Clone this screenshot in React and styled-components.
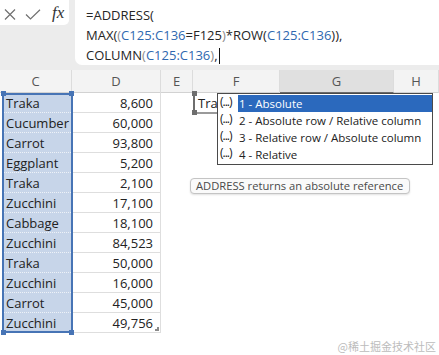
import React from "react";
import styled, { createGlobalStyle } from "styled-components";

const GlobalStyle = createGlobalStyle`
  html, body {
    margin: 0;
    padding: 0;
    background: #fff;
  }
  * {
    box-sizing: border-box;
  }
`;

const FONT = `"Open Sans", "Noto Sans", sans-serif`;

const rows = [
  ["Traka", "8,600"],
  ["Cucumber", "60,000"],
  ["Carrot", "93,800"],
  ["Eggplant", "5,200"],
  ["Traka", "2,100"],
  ["Zucchini", "17,100"],
  ["Cabbage", "18,100"],
  ["Zucchini", "84,523"],
  ["Traka", "50,000"],
  ["Zucchini", "16,000"],
  ["Carrot", "45,000"],
  ["Zucchini", "49,756"],
];

const headers = ["C", "D", "E", "F", "G", "H"];

const options = [
  "1 - Absolute",
  "2 - Absolute row / Relative column",
  "3 - Relative row / Absolute column",
  "4 - Relative",
];

function App() {
  return (
    <>
      <GlobalStyle />
      <Sheet>
        <TopBar>
          <IconBox>
            <svg width="12" height="11" viewBox="0 0 12 11">
              <path d="M1 0.5 L11 10.5 M11 0.5 L1 10.5" stroke="#707070" strokeWidth="1.2" fill="none" />
            </svg>
            <svg width="16" height="11" viewBox="0 0 16 11">
              <path d="M1 5.5 L5.5 10 L15 0.8" stroke="#707070" strokeWidth="1.2" fill="none" />
            </svg>
            <Fx>fx</Fx>
          </IconBox>
          <FormulaBox>
            <Line>=ADDRESS(</Line>
            <Line>
              MAX(<Paren>(</Paren>
              <Ref>C125:C136</Ref>=F125<Paren>)</Paren>*ROW(<Ref>C125:C136</Ref>)),
            </Line>
            <Line>
              COLUMN<Paren>(</Paren>
              <Ref>C125:C136</Ref>
              <Paren>)</Paren>,<Caret />
            </Line>
          </FormulaBox>
        </TopBar>

        <HeaderRow>
          {headers.map((h) => (
            <HeaderCell key={h} $active={h === "G"}>
              {h}
            </HeaderCell>
          ))}
        </HeaderRow>

        <Body>
          <RangeColumn>
            {rows.map(([name], i) => (
              <NameCell key={i}>{name}</NameCell>
            ))}
            <Handle $top $left />
            <Handle $top />
            <Handle $left />
            <Handle />
          </RangeColumn>
          <ValueColumn>
            {rows.map(([, value], i) => (
              <ValueCell key={i}>{value}</ValueCell>
            ))}
            <FillHandle />
          </ValueColumn>
          <EmptyColumn $w={32} />
          <EmptyColumn $w={87}>
            <RefCell>
              <RefText>Traka</RefText>
              <RefHandle $top />
              <RefHandle />
            </RefCell>
          </EmptyColumn>
          <EmptyColumn $w={114} />
          <EmptyColumn $w={45} />
        </Body>

        <Dropdown>
          {options.map((opt, i) => (
            <Option key={opt}>
              <OptIcon>(...)</OptIcon>
              <OptLabel $active={i === 0}>{opt}</OptLabel>
            </Option>
          ))}
        </Dropdown>

        <Tip>ADDRESS returns an absolute reference</Tip>

        <Watermark>@稀土掘金技术社区</Watermark>
      </Sheet>
    </>
  );
}

const Sheet = styled.div`
  position: relative;
  width: 439px;
  height: 355px;
  overflow: hidden;
  background: #fff;
  font-family: ${FONT};
  color: #222;
`;

const TopBar = styled.div`
  display: flex;
  align-items: flex-start;
  gap: 6px;
  height: 70px;
  background: #ececec;
`;

const IconBox = styled.div`
  display: flex;
  align-items: center;
  gap: 9px;
  width: 69px;
  height: 25px;
  padding: 3px 0 0 4px;
  background: #fff;
  border-radius: 0 0 5px 0;
`;

const Fx = styled.span`
  font-family: "Liberation Serif", serif;
  font-style: italic;
  font-size: 17px;
  color: #333;
  margin-left: 2px;
  margin-top: -2px;
`;

const FormulaBox = styled.div`
  flex: 1;
  height: 65px;
  padding: 5px 0 0 11px;
  background: #fff;
  border-radius: 0 0 0 7px;
  font-size: 13px;
  line-height: 20px;
  color: #262626;
`;

const Line = styled.div`
  white-space: nowrap;
`;

const Ref = styled.span`
  color: #2f68b0;
`;

const Paren = styled.span`
  color: #8c8c8c;
`;

const Caret = styled.span`
  display: inline-block;
  width: 1px;
  height: 16px;
  margin-left: 1px;
  vertical-align: -4px;
  background: #111;
`;

const HeaderRow = styled.div`
  display: grid;
  grid-template-columns: 72px 89px 32px 87px 114px 1fr;
  height: 23px;
  background: #f3f3f3;
  border-bottom: 1px solid #d2d2d2;
`;

const HeaderCell = styled.div`
  text-align: center;
  font-size: 13px;
  line-height: 22px;
  color: #555;
  border-right: 1px solid #dcdcdc;
  background: ${(p) => (p.$active ? "#e0e0e0" : "transparent")};
  background-image: ${(p) =>
    p.$active ? "radial-gradient(#c9c9c9 0.6px, transparent 0.7px)" : "none"};
  background-size: 2px 2px;
  border-bottom: ${(p) => (p.$active ? "1px solid #6a6a6a" : "none")};
`;

const Body = styled.div`
  display: flex;
  align-items: flex-start;
`;

const RangeColumn = styled.div`
  position: relative;
  width: 71px;
  margin-left: 2px;
  background: #c7d5e9;

  &::after {
    content: "";
    position: absolute;
    inset: 0;
    border: 2px solid #4774b5;
    pointer-events: none;
  }
`;

const Handle = styled.span`
  position: absolute;
  z-index: 2;
  width: 5px;
  height: 5px;
  background: #4774b5;
  ${(p) => (p.$top ? "top: -2px;" : "bottom: -2px;")}
  ${(p) => (p.$left ? "left: -1px;" : "right: -1px;")}
`;

const NameCell = styled.div`
  height: 20px;
  padding-left: 4px;
  font-size: 13px;
  line-height: 20px;
  border-bottom: 1px dotted #eef2f8;
  white-space: nowrap;

  &:last-of-type {
    border-bottom: none;
  }
`;

const ValueColumn = styled.div`
  position: relative;
  width: 88px;
`;

const ValueCell = styled.div`
  height: 20px;
  padding-right: 7px;
  text-align: right;
  font-size: 13px;
  line-height: 20px;
  border-bottom: 1px solid #dedede;
  border-right: 1px solid #dedede;
`;

const FillHandle = styled.span`
  position: absolute;
  right: 2px;
  bottom: 2px;
  width: 4px;
  height: 4px;
  border-right: 2px solid #8a8a8a;
  border-bottom: 2px solid #8a8a8a;
`;

const EmptyColumn = styled.div`
  width: ${(p) => p.$w}px;
  flex-shrink: 0;
`;

const RefCell = styled.div`
  position: relative;
  width: 24px;
  height: 21px;
  border-left: 2px solid #6e6e6e;
  border-bottom: 2px solid #9a9a9a;
`;

const RefText = styled.div`
  overflow: hidden;
  padding-left: 3px;
  font-size: 13px;
  line-height: 20px;
  white-space: nowrap;
`;

const RefHandle = styled.span`
  position: absolute;
  left: -3px;
  width: 5px;
  height: 5px;
  background: #6e6e6e;
  ${(p) => (p.$top ? "top: -2px;" : "bottom: -3px;")}
`;

const Dropdown = styled.div`
  position: absolute;
  left: 217px;
  top: 93px;
  width: 216px;
  padding: 1px 0;
  background: #fff;
  border: 1px solid #4a4a4a;
`;

const Option = styled.div`
  display: flex;
  height: 17px;
`;

const OptIcon = styled.span`
  width: 20px;
  height: 15px;
  padding-left: 2px;
  font-size: 12px;
  line-height: 14px;
  letter-spacing: -1px;
  color: #1a1a1a;
  white-space: nowrap;
`;

const OptLabel = styled.span`
  flex: 1;
  padding-left: 1px;
  font-size: 11.5px;
  line-height: 17px;
  white-space: nowrap;
  color: ${(p) => (p.$active ? "#fff" : "#222")};
  background: ${(p) => (p.$active ? "#2b69bd" : "transparent")};
`;

const Tip = styled.div`
  position: absolute;
  left: 190px;
  top: 178px;
  height: 16px;
  padding: 0 6px 0 5px;
  font-size: 11.2px;
  line-height: 14px;
  color: #4a4a4a;
  background: #fafafa;
  border: 1px solid #c4c4c4;
  border-radius: 4px;
  box-shadow: 0 1px 2px rgba(0, 0, 0, 0.12);
  white-space: nowrap;
`;

const Watermark = styled.div`
  position: absolute;
  right: 3px;
  bottom: 1px;
  font-family: "Noto Sans CJK SC", sans-serif;
  font-size: 11px;
  color: #bcbcbc;
`;

export default App;
